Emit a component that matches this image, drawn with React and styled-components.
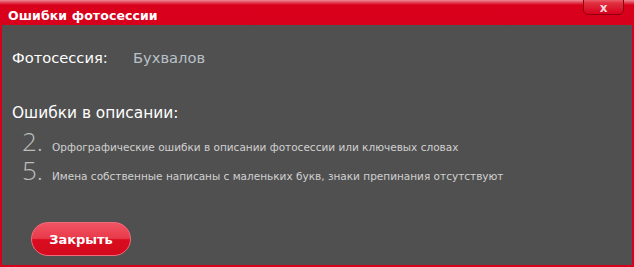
import React from "react";
import styled, { createGlobalStyle } from "styled-components";

const Global = createGlobalStyle`
  html, body {
    margin: 0;
    padding: 0;
    background: #505050;
  }
  * {
    box-sizing: border-box;
  }
`;

const Window = styled.div`
  width: 634px;
  height: 267px;
  display: flex;
  flex-direction: column;
  background: #d5001b;
  padding: 0 2px 2px 2px;
  font-family: "DejaVu Sans", Verdana, sans-serif;
`;

const TitleBar = styled.div`
  position: relative;
  height: 25px;
  margin: 0 -2px;
  padding: 5px 0 0 8px;
  background: linear-gradient(
    to bottom,
    #ee8a96 0px,
    #e4505f 2px,
    #d9001b 5px,
    #d7001c 100%
  );
`;

const Title = styled.span`
  color: #fff;
  font-size: 12.5px;
  font-weight: bold;
  letter-spacing: 0.1px;
`;

const CloseButton = styled.button`
  position: absolute;
  top: -3px;
  right: 10px;
  width: 41px;
  height: 18px;
  border: 1px solid #8a0010;
  border-radius: 0 0 5px 5px;
  background: linear-gradient(to bottom, #f07c88 0px, #e03040 5px, #d7001c 100%);
  color: #f4d8dc;
  font-family: "DejaVu Sans", sans-serif;
  font-weight: bold;
  font-size: 12px;
  line-height: 16px;
  padding: 2px 0 0;
  cursor: pointer;
`;

const Body = styled.div`
  flex: 1;
  background: #505050;
  padding: 24px 10px 0 10px;
  display: flex;
  flex-direction: column;
`;

const InfoRow = styled.div`
  display: flex;
  align-items: baseline;
  font-size: 14.7px;
  color: #ffffff;
`;

const Label = styled.span`
  width: 121px;
`;

const Value = styled.span`
  color: #b8c0c8;
`;

const Heading = styled.div`
  margin-top: 38px;
  font-size: 15.4px;
  color: #ffffff;
`;

const List = styled.div`
  margin-top: 5px;
  padding-left: 10px;
  display: flex;
  flex-direction: column;
`;

const Item = styled.div`
  display: flex;
  align-items: baseline;
  height: 29px;
  line-height: 29px;
`;

const Num = styled.span`
  width: 30px;
  font-family: "Open Sans", sans-serif;
  font-weight: 300;
  font-size: 26px;
  color: #bdbdbd;
`;

const ItemText = styled.span`
  font-size: 10.5px;
  color: #d0d0d0;
`;

const Footer = styled.div`
  margin-top: auto;
  padding: 0 0 9px 19px;
`;

const PillButton = styled.button`
  width: 100px;
  height: 34px;
  border-radius: 17px;
  border: 1px solid #f26a78;
  background: linear-gradient(
    to bottom,
    #f25464 0%,
    #e83a4a 48%,
    #da0d20 52%,
    #d20a1d 100%
  );
  color: #fff;
  font-family: "DejaVu Sans", sans-serif;
  font-weight: bold;
  font-size: 13px;
  cursor: pointer;
`;

const errors = [
  { n: "2.", text: "Орфографические ошибки в описании фотосессии или ключевых словах" },
  { n: "5.", text: "Имена собственные написаны с маленьких букв, знаки препинания отсутствуют" },
];

const App = () => {
  return (
    <Window>
      <Global />
      <TitleBar>
        <Title>Ошибки фотосессии</Title>
        <CloseButton>x</CloseButton>
      </TitleBar>
      <Body>
        <InfoRow>
          <Label>Фотосессия:</Label>
          <Value>Бухвалов</Value>
        </InfoRow>
        <Heading>Ошибки в описании:</Heading>
        <List>
          {errors.map((e) => (
            <Item key={e.n}>
              <Num>{e.n}</Num>
              <ItemText>{e.text}</ItemText>
            </Item>
          ))}
        </List>
        <Footer>
          <PillButton>Закрыть</PillButton>
        </Footer>
      </Body>
    </Window>
  );
};

export default App;
